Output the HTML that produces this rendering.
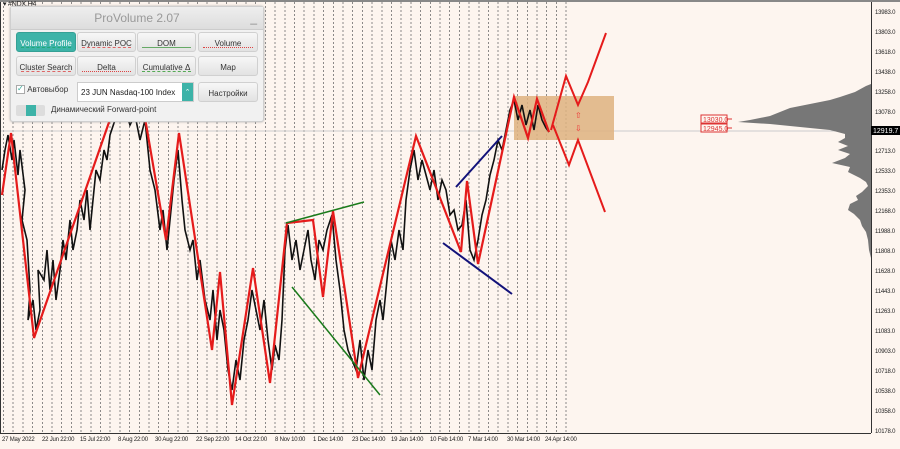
<!DOCTYPE html>
<html><head><meta charset="utf-8"><style>
body{margin:0;width:900px;height:449px;overflow:hidden;background:#fdf5ef;font-family:"Liberation Sans","DejaVu Sans",sans-serif;position:relative}
.grid{position:absolute;left:3px;top:2px;width:565px;height:431px;background:repeating-linear-gradient(90deg,#666 0 1px,transparent 1px 9.7px);-webkit-mask-image:repeating-linear-gradient(180deg,#000 0 2px,transparent 2px 4px);mask-image:repeating-linear-gradient(180deg,#000 0 2px,transparent 2px 4px);opacity:.75}
.ax{position:absolute;font-size:6px;color:#222;white-space:nowrap;letter-spacing:-0.2px}
.panel{position:absolute;left:10px;top:6px;width:252px;height:114px;background:#f1f1f1;border:1px solid #cfcfcf;border-radius:3px;box-shadow:0 0 2px #aaa}
.title{position:absolute;left:0;top:0;width:252px;height:22px;background:linear-gradient(#eee,#ddd);color:#999;font-size:12px;text-align:center;line-height:22px;border-bottom:1px solid #ccc}
.btn{position:absolute;height:20px;background:linear-gradient(#f7f7f7,#e2e2e2);border:1px solid #d0d0d0;border-radius:3px;font-size:8px;color:#333;text-align:center;line-height:21px;box-sizing:border-box}
.btn.on{background:#3db3a8;color:#fff;border-color:#35a095}
.btn i{position:absolute;left:4px;bottom:2px;right:4px;height:1px;border-top:1px dashed #d66}
</style></head><body>
<div style="position:absolute;left:0;top:0;width:900px;height:2px;background:#888"></div>
<div class="grid"></div>
<svg width="900" height="449" style="position:absolute;left:0;top:0">
<line x1="0" y1="131" x2="871" y2="131" stroke="#ccc" stroke-width="1"/>
<rect x="514" y="96" width="100" height="44" fill="#deb27f" opacity=".85"/>
<path d="M871,84 L866,86 855,92 840,97 830,100 810,104 790,108 780,112 770,116 750,120 738,122 770,124 800,127 830,130 845,134 845,138 838,142 848,146 838,150 850,154 845,158 832,163 850,167 848,172 860,178 866,182 868,186 862,192 856,196 858,200 850,204 848,210 854,214 860,220 862,226 866,232 868,240 869,250 871,258 Z" fill="#777"/>
<polyline fill="none" stroke="#111" stroke-width="1.6" points="2,170 5,150 8,135 12,160 14,140 18,175 20,150 25,190 22,220 27,240 30,290 28,320 33,300 36,330 40,310 38,270 44,280 47,250 50,290 53,260 56,300 60,270 63,240 66,260 70,220 73,250 77,230 80,200 84,220 87,190 90,230 93,200 96,170 100,180 104,150 107,160 110,135 115,120 120,115 125,110 130,125 135,115 140,140 145,120 150,170 155,190 160,230 163,210 167,250 170,220 174,180 178,150 182,200 185,230 190,250 193,240 197,280 200,260 205,300 210,320 213,290 217,340 220,310 224,330 228,370 232,390 236,360 240,380 244,340 248,320 252,290 256,310 260,330 264,300 268,340 272,370 275,345 279,360 282,320 285,250 288,225 292,260 296,240 300,270 304,250 308,230 311,260 315,280 319,240 323,250 327,230 332,215 336,260 340,290 344,330 348,350 352,360 356,370 360,340 364,380 368,350 372,370 376,320 380,300 383,320 387,280 391,240 395,260 399,230 403,250 406,200 410,170 414,150 418,180 422,160 426,175 430,190 434,170 438,200 442,180 446,190 450,215 454,210 458,230 462,225 466,200 470,250 474,260 478,240 482,215 486,200 490,175 494,160 498,140 502,150 506,130 510,110 514,100 518,120 522,105 526,125 530,110 534,130 538,105 542,120 546,128 549,132"/>
<polyline fill="none" stroke="#e51b1b" stroke-width="2.2" points="2,195 11,133 34,338 115,105 145,118 166,240 179,133 212,350 220,272 232,405 253,268 270,383 287,223 313,220 323,297 333,211 358,378 416,136 461,252 467,181 478,264 514,97 528,138 537,99 549,132"/>
<polyline fill="none" stroke="#e51b1b" stroke-width="2" points="551,130 566,76 578,105 588,82 606,33"/>
<polyline fill="none" stroke="#e51b1b" stroke-width="2" points="553,125 569,165 578,140 605,212"/>
<line x1="286" y1="223" x2="364" y2="202" stroke="#1a7a1a" stroke-width="1.5"/>
<line x1="292" y1="287" x2="380" y2="395" stroke="#1a7a1a" stroke-width="1.5"/>
<line x1="456" y1="187" x2="502" y2="136" stroke="#12127a" stroke-width="2"/>
<line x1="443" y1="243" x2="512" y2="294" stroke="#12127a" stroke-width="2"/>
<text x="575" y="118" font-size="8" fill="#e33" font-family="Liberation Sans">⇧</text>
<text x="575" y="131" font-size="8" fill="#e33" font-family="Liberation Sans">⇩</text>
<rect x="701" y="115" width="26" height="8" fill="#fdf5ef" stroke="#d33" stroke-width="1"/>
<text x="703" y="122" font-size="7" fill="#d33" font-family="Liberation Sans">13030.0</text>
<line x1="727" y1="119" x2="732" y2="119" stroke="#d33"/>
<rect x="701" y="124" width="26" height="8" fill="#fdf5ef" stroke="#d33" stroke-width="1"/>
<text x="703" y="131" font-size="7" fill="#d33" font-family="Liberation Sans">12945.0</text>
<line x1="727" y1="128" x2="732" y2="128" stroke="#d33"/>
<line x1="871.5" y1="2" x2="871.5" y2="433" stroke="#333"/>
<line x1="0" y1="433.5" x2="871" y2="433.5" stroke="#333"/>
<line x1="0.5" y1="2" x2="0.5" y2="433" stroke="#333"/>
<rect x="871" y="126" width="29" height="9" fill="#000"/>
<text x="873" y="133" font-size="7" fill="#fff" font-family="Liberation Sans">12919.7</text>
</svg>
<div class="ax" style="left:3px;top:0px;font-size:7px">▾ #NDX,H4</div>
<div class="ax" style="left:875px;top:10px">13983.0</div>
<div class="ax" style="left:875px;top:30px">13803.0</div>
<div class="ax" style="left:875px;top:50px">13618.0</div>
<div class="ax" style="left:875px;top:70px">13438.0</div>
<div class="ax" style="left:875px;top:90px">13258.0</div>
<div class="ax" style="left:875px;top:110px">13078.0</div>
<div class="ax" style="left:875px;top:149px">12713.0</div>
<div class="ax" style="left:875px;top:169px">12533.0</div>
<div class="ax" style="left:875px;top:189px">12353.0</div>
<div class="ax" style="left:875px;top:209px">12168.0</div>
<div class="ax" style="left:875px;top:229px">11988.0</div>
<div class="ax" style="left:875px;top:249px">11808.0</div>
<div class="ax" style="left:875px;top:269px">11628.0</div>
<div class="ax" style="left:875px;top:289px">11443.0</div>
<div class="ax" style="left:875px;top:309px">11263.0</div>
<div class="ax" style="left:875px;top:329px">11083.0</div>
<div class="ax" style="left:875px;top:349px">10903.0</div>
<div class="ax" style="left:875px;top:369px">10718.0</div>
<div class="ax" style="left:875px;top:389px">10538.0</div>
<div class="ax" style="left:875px;top:409px">10358.0</div>
<div class="ax" style="left:875px;top:429px">10178.0</div>
<div class="ax" style="left:2px;top:437px">27 May 2022</div>
<div class="ax" style="left:42px;top:437px">22 Jun 22:00</div>
<div class="ax" style="left:80px;top:437px">15 Jul 22:00</div>
<div class="ax" style="left:118px;top:437px">8 Aug 22:00</div>
<div class="ax" style="left:155px;top:437px">30 Aug 22:00</div>
<div class="ax" style="left:196px;top:437px">22 Sep 22:00</div>
<div class="ax" style="left:235px;top:437px">14 Oct 22:00</div>
<div class="ax" style="left:275px;top:437px">8 Nov 10:00</div>
<div class="ax" style="left:313px;top:437px">1 Dec 14:00</div>
<div class="ax" style="left:352px;top:437px">23 Dec 14:00</div>
<div class="ax" style="left:391px;top:437px">19 Jan 14:00</div>
<div class="ax" style="left:430px;top:437px">10 Feb 14:00</div>
<div class="ax" style="left:468px;top:437px">7 Mar 14:00</div>
<div class="ax" style="left:507px;top:437px">30 Mar 14:00</div>
<div class="ax" style="left:545px;top:437px">24 Apr 14:00</div>
<div class="panel">
 <div class="title">ProVolume 2.07<span style="position:absolute;right:6px;top:0;color:#888">_</span></div>
 <div class="btn on" style="left:5px;top:25px;width:60px">Volume Profile<i style="border-color:#2a7"></i></div>
 <div class="btn" style="left:66px;top:25px;width:59px">Dynamic POC<i></i></div>
 <div class="btn" style="left:126px;top:25px;width:59px">DOM<i style="border-top:1px solid #6a6"></i></div>
 <div class="btn" style="left:187px;top:25px;width:60px">Volume<i style="border-top:1px dotted #d44"></i></div>
 <div class="btn" style="left:5px;top:49px;width:60px">Cluster Search<i></i></div>
 <div class="btn" style="left:66px;top:49px;width:59px">Delta<i style="border-top:1px dotted #d44"></i></div>
 <div class="btn" style="left:126px;top:49px;width:59px">Cumulative Δ<i style="border-color:#5a5"></i></div>
 <div class="btn" style="left:187px;top:49px;width:60px">Map</div>
 <div style="position:absolute;left:5px;top:78px;font-size:8px;color:#333"><span style="display:inline-block;width:7px;height:7px;border:1px solid #aaa;background:#fff;color:#3a9;font-size:8px;line-height:6px;vertical-align:middle">✓</span> Автовыбор</div>
 <div style="position:absolute;left:66px;top:75px;width:117px;height:20px;background:#fff;border:1px solid #ccc;box-sizing:border-box;font-size:8px;line-height:19px;padding-left:3px;color:#222">23 JUN Nasdaq-100 Index<span style="position:absolute;right:0;top:0;width:11px;height:18px;background:#3db3a8;color:#fff;font-size:7px;text-align:center">⌃</span></div>
 <div class="btn" style="left:187px;top:75px;width:60px">Настройки</div>
 <div style="position:absolute;left:5px;top:98px;width:29px;height:11px;background:#ddd;border-radius:2px"><div style="position:absolute;left:10px;top:0;width:10px;height:11px;background:#3db3a8"></div></div>
 <div style="position:absolute;left:40px;top:98px;font-size:8px;color:#333">Динамический Forward-point</div>
</div>
</body></html>
